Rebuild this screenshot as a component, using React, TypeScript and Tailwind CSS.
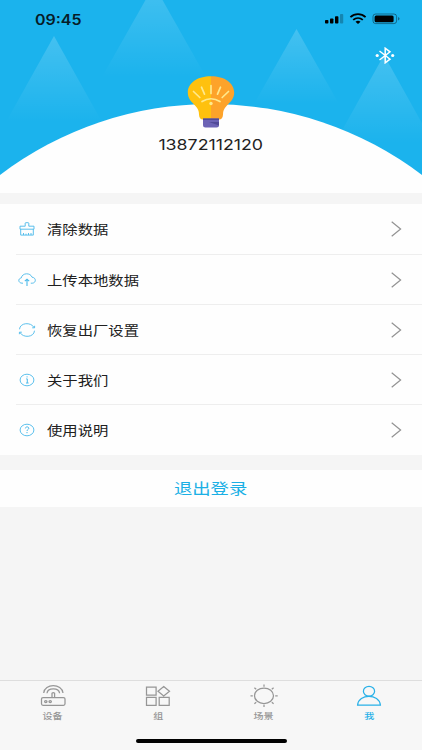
import React, { useState } from "react";

type RowProps = {
  icon: React.ReactNode;
  label: string;
  first?: boolean;
  last?: boolean;
};

type TabProps = {
  icon: React.ReactNode;
  label: string;
  active: boolean;
  onClick: () => void;
};

function StatusBar() {
  return (
    <div className="flex h-[38px] items-end justify-between pl-[35px] pr-[22px]">
      <span className="h-[28px] origin-left scale-x-[1.14] pt-px font-['Inter',sans-serif] text-[14px] font-semibold leading-[18px] text-[#071c28]">
        09:45
      </span>
      <svg width="76" height="12" viewBox="0 0 76 12" className="mb-[13px]">
        <rect x="1" y="7" width="3.4" height="3.5" rx="0.8" />
        <rect x="6" y="5.5" width="3.4" height="5" rx="0.8" />
        <rect x="11" y="3.3" width="3.4" height="7.2" rx="0.8" />
        <rect x="16" y="1" width="3.2" height="9.5" rx="0.8" opacity="0.25" />
        <g fill="none" stroke="#000" strokeWidth="1.8">
          <path d="M26.4 4.2C30.8 0.2 37.2 0.2 41.6 4.2" />
          <path d="M29.2 6.9C32 4.4 36 4.4 38.8 6.9" />
        </g>
        <path d="M31.5 8.700Q34 7 36.500 8.700L34 10.900z" />
        <rect
          x="49"
          y="1"
          width="23.6"
          height="9.6"
          rx="2.6"
          fill="none"
          stroke="#000"
          strokeOpacity="0.4"
        />
        <rect x="50.6" y="2.4" width="19" height="6.8" rx="1.5" />
        <path d="M74 4v3.6q1.6-.6 1.6-1.8T74 4z" opacity="0.4" />
      </svg>
    </div>
  );
}

function HeroBackground() {
  return (
    <svg
      className="absolute inset-0 h-full w-full"
      viewBox="0 0 422 193"
      preserveAspectRatio="none"
    >
      <defs>
        <linearGradient id="beam" x1="0" y1="0" x2="0" y2="1">
          <stop offset="0" stopColor="#fff" stopOpacity="0.18" />
          <stop offset="1" stopColor="#fff" stopOpacity="0" />
        </linearGradient>
      </defs>
      <rect width="422" height="193" fill="#1bb3ed" />
      <g fill="url(#beam)">
        <path d="M54 36L102 122H6z" />
        <path d="M154 -15L206 77H102z" />
        <path d="M296.5 29L339 104H254z" />
        <path d="M384 55L433 143H335z" />
      </g>
      <path d="M0 175A349 349 0 0 1 422 175V193H0z" fill="#fefefe" />
    </svg>
  );
}

function BulbAvatar() {
  return (
    <svg width="48" height="52" viewBox="0 0 48 52">
      <path
        d="M24 .3C10.5.3.8 7 .8 16.5c0 6.500 4 9.500 7.700 13.500C11 33 12 34.500 12 38.500c0 3 1.500 5 4 5H24z"
        fill="#ffc10e"
      />
      <path
        d="M24 .3C37.500.3 47.200 7 47.200 16.500c0 6.500-4 9.500-7.700 13.500C37 33 36 34.500 36 38.500c0 3-1.500 5-4 5H24z"
        fill="#fda32a"
      />
      <g fill="none" stroke="#ffe98c" strokeWidth="1.7" strokeLinecap="round">
        <path d="M6.500 15.500l6.300 6M14.500 11.200l3 7M24 9.500v8M33.500 11.200l-3 7M41.500 15.500l-6.300 6" />
        <path d="M15 25.500Q24 20 33 25.500" />
      </g>
      <circle cx="24" cy="27.500" r="1.700" fill="#ffe98c" />
      <path d="M16 42.500h16V49q0 2.500-2.500 2.500h-11Q16 51.500 16 49z" fill="#6c63b5" />
      <path d="M16 42.500h16V44H16zM22 46h10v3.500z" fill="#514a97" />
    </svg>
  );
}

function BluetoothIcon() {
  return (
    <svg
      width="20"
      height="17"
      viewBox="0 0 20 17"
      fill="none"
      stroke="#fff"
      strokeWidth="1.5"
    >
      <path d="M4.5 4L15 12.2 10.2 15.8V1.2L15 4.8 4.5 13" />
      <circle cx="2.2" cy="8.5" r="1.6" fill="#fff" stroke="none" />
      <circle cx="17.7" cy="8.5" r="1.6" fill="#fff" stroke="none" />
    </svg>
  );
}

function RowIcon({ children }: { children: React.ReactNode }) {
  return (
    <svg
      width="18"
      height="14"
      viewBox="0 0 18 14"
      fill="none"
      stroke="#49b9ea"
      strokeWidth="0.9"
    >
      {children}
    </svg>
  );
}

const rows = [
  {
    label: "清除数据",
    icon: (
      <RowIcon>
        <path d="M2.700 7.200v5.900h12.600V7.200M2 7.200V4.200h5.200V1.300q0-.6.7-.6h2.200q.7 0 .7.600v2.900H16v3zM5.500 13v-2M8 13v-1.300M10.500 13v-2M13 13v-2" />
      </RowIcon>
    ),
  },
  {
    label: "上传本地数据",
    icon: (
      <RowIcon>
        <path d="M5 10.200H4C.2 10-.4 5.600 3.300 4.900 4.200-.4 12.500-.5 14 4.200c4.500.4 4.200 5.800.3 6h-1.500" />
        <path d="M9 13V6.500M6.800 8.200L9 6.300l2.200 1.900" strokeWidth="1.1" />
      </RowIcon>
    ),
  },
  {
    label: "恢复出厂设置",
    icon: (
      <RowIcon>
        <path d="M1.500 6.300C1.900-.5 13-1.200 16 4.500M16.500 7.700C16.100 14.500 5 15.200 2 9.500" />
        <path d="M16.600 2.800v2h-2.400M1.400 11.200v-2h2.400" />
      </RowIcon>
    ),
  },
  {
    label: "关于我们",
    icon: (
      <RowIcon>
        <ellipse cx="9" cy="7" rx="6.9" ry="5.8" />
        <path d="M8.200 5.900h1.100v4M8 10h2.600M8.500 3.900h1.100" strokeWidth="1" />
      </RowIcon>
    ),
  },
  {
    label: "使用说明",
    icon: (
      <RowIcon>
        <ellipse cx="9" cy="7" rx="6.9" ry="5.8" />
        <path
          d="M7.400 5.400c0-2 3.400-2 3.400-.1C10.800 6.500 9 6.500 9 8M9 9v1.200"
          strokeWidth="1"
        />
      </RowIcon>
    ),
  },
];

function Row({ icon, label, first, last }: RowProps) {
  return (
    <button className="flex w-full pl-4 text-left">
      <div
        className={`flex flex-1 items-center pl-[2px] pr-5 ${
          first ? "h-[51px]" : "h-[50px]"
        } ${last ? "" : "border-b border-[#eeeeee]"}`}
      >
        {icon}
        <span className="ml-[11px] origin-left scale-x-[1.18] text-[13px] leading-5 text-[#202020]">
          {label}
        </span>
        <svg
          className="ml-auto"
          width="12"
          height="16"
          viewBox="0 0 12 16"
          fill="none"
          stroke="#929292"
          strokeWidth="1.2"
        >
          <path d="M1.7 .8L10.6 8 1.7 15.2" />
        </svg>
      </div>
    </button>
  );
}

const tabs = [
  {
    label: "设备",
    icon: (
      <>
        <rect x="1.500" y="13.500" width="23.500" height="7.800" rx="1.500" />
        <path d="M12 13.500V9.300q1.300-1.300 2.600 0v4.200M3.700 9C4.500-.8 22-.8 23 9M7 9.300c.5-6 12-6 12.600 0" />
        <ellipse cx="5.800" cy="17.500" rx="1.200" ry="1" />
        <ellipse cx="10.200" cy="17.500" rx="1.200" ry="1" />
      </>
    ),
  },
  {
    label: "组",
    icon: (
      <path d="M1.500 3.200h9.600v8H1.500zM1.500 13.300h9.600v8.100H1.500zM14.200 13.300h10v8.100h-10zM18.700 2.500l5.800 4.700-5.800 4.700L13 7.200z" />
    ),
  },
  {
    label: "场景",
    icon: (
      <>
        <ellipse cx="13" cy="11.800" rx="9.500" ry="7.800" />
        <path d="M13 .5v2.300M13 20.800v2.200M-.5 11.800h2.300M24.200 11.800h2.500M3.400 3.800l1.800 1.500M22.600 3.800l-1.800 1.500M3.400 19.800l1.800-1.500M22.600 19.800l-1.800-1.500" />
      </>
    ),
  },
  {
    label: "我",
    icon: (
      <>
        <ellipse cx="13" cy="7.300" rx="5.600" ry="4.900" />
        <path d="M1.600 21.100C2.500 9.500 23.300 9.500 24.400 21.100z" />
      </>
    ),
  },
];

function Tab({ icon, label, active, onClick }: TabProps) {
  return (
    <button
      onClick={onClick}
      className={`flex flex-col items-center pt-[3px] ${
        active ? "text-[#29b1e8]" : "text-[#969696]"
      }`}
    >
      <svg
        width="26"
        height="24"
        viewBox="0 0 26 24"
        fill="none"
        stroke="currentColor"
        strokeWidth="1.25"
        className="overflow-visible"
      >
        {icon}
      </svg>
      <span className="-mt-px scale-x-[1.18] text-[8.5px] font-medium leading-[16px]">
        {label}
      </span>
    </button>
  );
}

export default function App() {
  const [tab, setTab] = useState("我");

  return (
    <div className="flex h-[750px] w-[422px] flex-col overflow-hidden bg-[#f5f5f5] font-['Noto_Sans_CJK_SC',sans-serif]">
      <header className="relative h-[193px] shrink-0">
        <HeroBackground />
        <div className="relative flex flex-col">
          <StatusBar />
          <div className="flex h-[38px] justify-end pr-[27px] pt-[9px]">
            <BluetoothIcon />
          </div>
          <div className="flex flex-col items-center">
            <BulbAvatar />
            <span className="mt-[7px] scale-x-[1.225] font-['Inter',sans-serif] text-[14.5px] leading-5 text-[#222]">
              13872112120
            </span>
          </div>
        </div>
      </header>

      <main className="flex flex-1 flex-col pt-[11px]">
        <section className="bg-[#fefefe]">
          {rows.map((row, i) => (
            <Row
              key={row.label}
              {...row}
              first={i === 0}
              last={i === rows.length - 1}
            />
          ))}
        </section>
        <button className="mt-[15px] flex h-[37px] items-center justify-center bg-[#fefefe] pb-[3px]">
          <span className="scale-x-[1.2] text-[15.3px] leading-5 text-[#1bb0e5]">
            退出登录
          </span>
        </button>
      </main>

      <nav className="h-[70px] shrink-0 border-t border-[#dedede] bg-[#f7f7f7]">
        <div className="grid h-[58px] grid-cols-4">
          {tabs.map((t) => (
            <Tab
              key={t.label}
              {...t}
              active={tab === t.label}
              onClick={() => setTab(t.label)}
            />
          ))}
        </div>
        <div className="mx-auto h-[4px] w-[151px] rounded-full bg-black" />
      </nav>
    </div>
  );
}
